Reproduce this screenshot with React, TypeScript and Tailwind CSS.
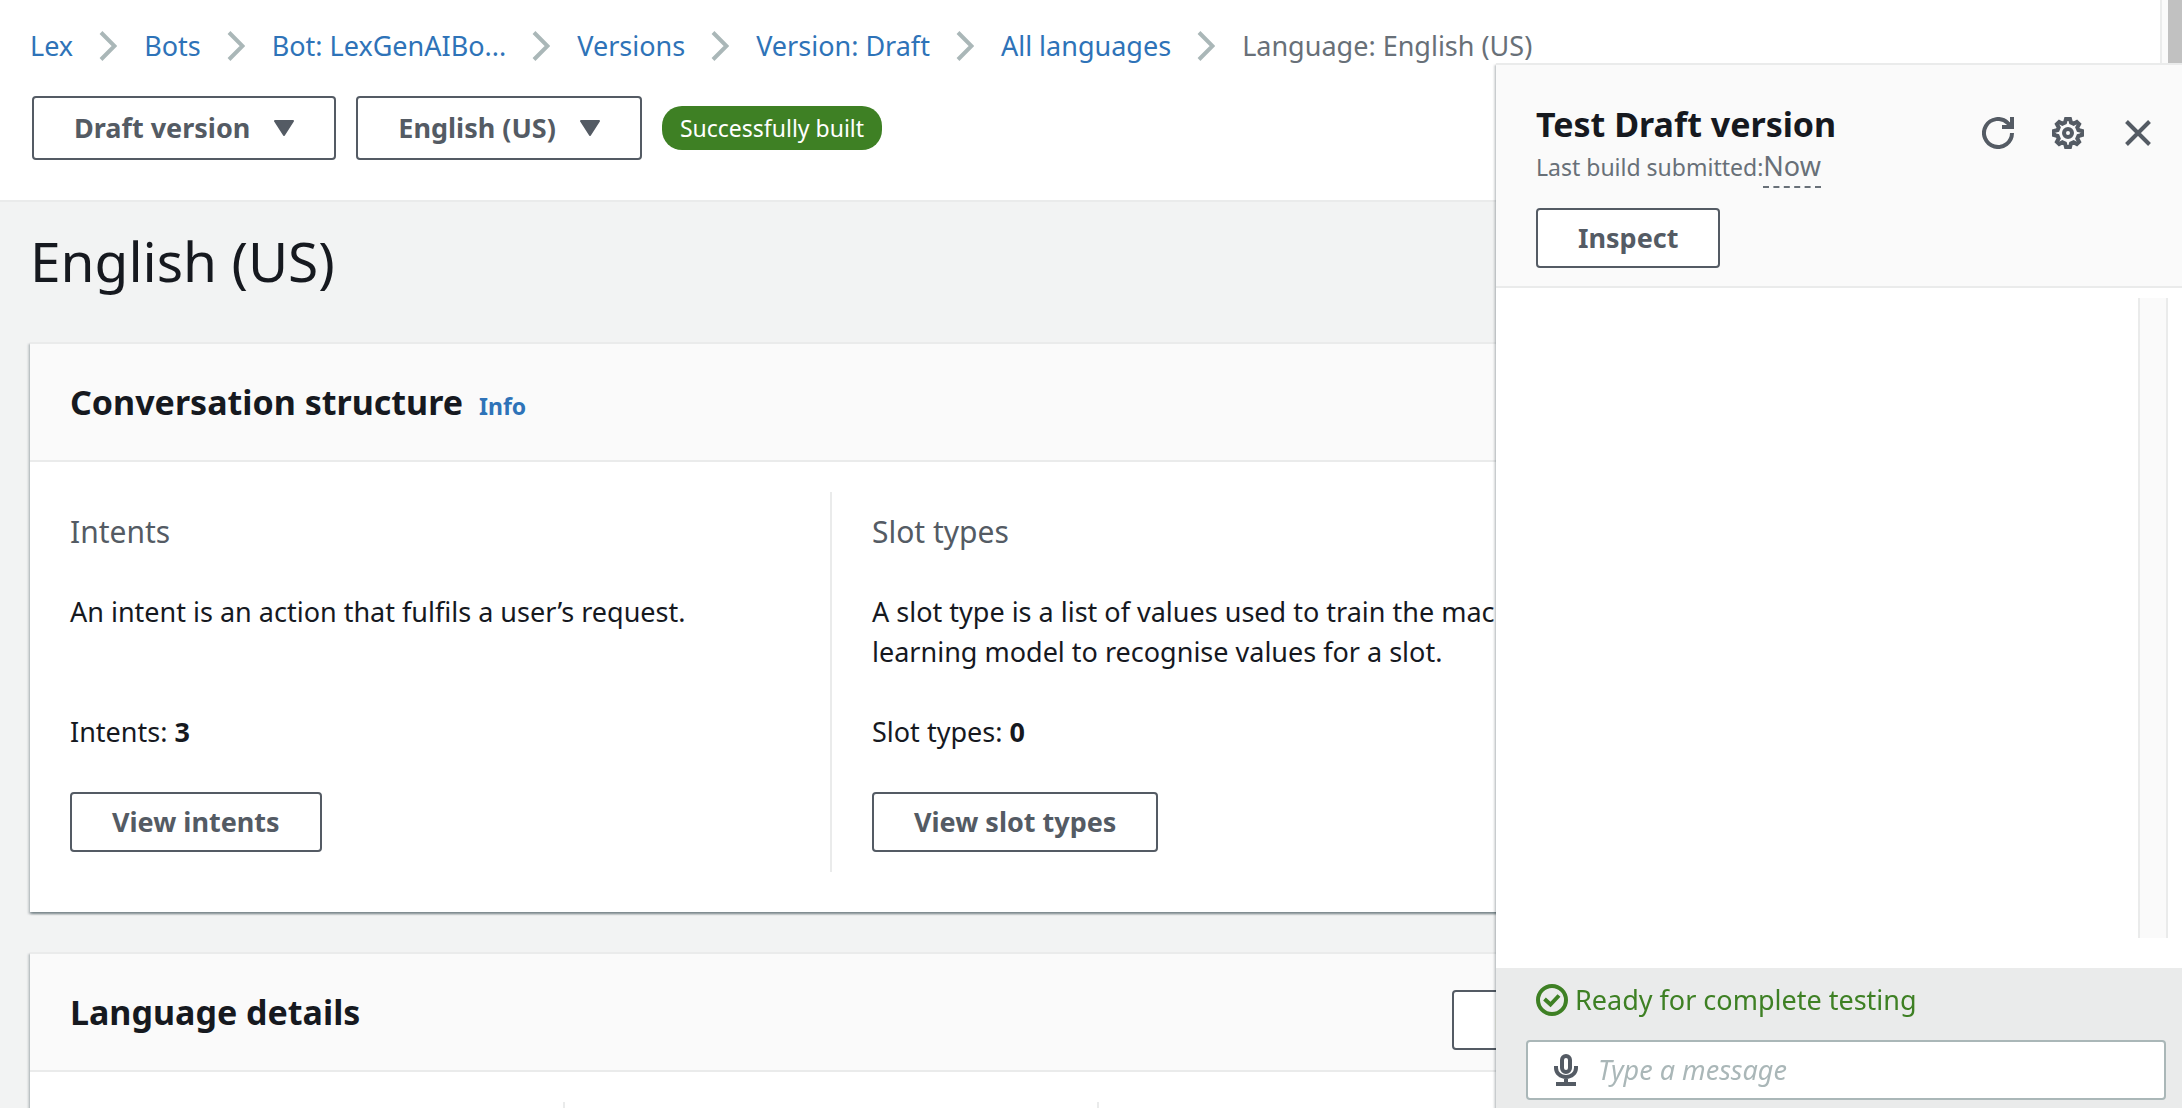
import type { ReactNode } from "react";

const crumbs = ["Lex", "Bots", "Bot: LexGenAIBo...", "Versions", "Version: Draft", "All languages"];

const raised =
  "shadow-[0_2px_2px_0_rgba(0,28,36,0.3),2px_2px_2px_0_rgba(0,28,36,0.15),-2px_2px_2px_0_rgba(0,28,36,0.15)]";

function Chevron() {
  return (
    <svg className="h-[30px] w-[18px] shrink-0" viewBox="0 0 18 30" fill="none" stroke="#aab7b8" strokeWidth="4" aria-hidden="true">
      <path d="M2 1.5 15.5 15 2 28.5" />
    </svg>
  );
}

function Caret() {
  return (
    <svg className="h-4 w-5" viewBox="0 0 20 16" fill="currentColor" stroke="currentColor" strokeWidth="2" strokeLinejoin="round" aria-hidden="true">
      <path d="M1 1h18L10 15z" />
    </svg>
  );
}

function RefreshIcon() {
  return (
    <svg className="size-8" viewBox="0 0 32 32" fill="none" stroke="currentColor" strokeWidth="4" aria-hidden="true">
      <path d="M30 16A14 14 0 1 1 25.9 6.1L29 9" />
      <path d="M30 0v10H20" />
    </svg>
  );
}

function GearIcon() {
  return (
    <svg className="size-8" viewBox="0 0 32 32" fill="none" stroke="currentColor" strokeWidth="4" aria-hidden="true">
      <path d="M14 2h4l1 3.6 2.6 1.1L24.8 4.9 27.1 7.2 25.3 10.4 26.4 13 30 14v4l-3.6 1-1.1 2.6 1.8 3.2-2.3 2.3-3.2-1.8L19 26.4 18 30h-4l-1-3.6-2.6-1.1-3.2 1.8-2.3-2.3 1.8-3.2L5.6 19 2 18v-4l3.6-1 1.1-2.6L4.9 7.2 7.2 4.9l3.2 1.8L13 5.6z" />
      <circle cx="16" cy="16" r="4" />
    </svg>
  );
}

function CloseIcon() {
  return (
    <svg className="size-8" viewBox="0 0 32 32" fill="none" stroke="currentColor" strokeWidth="4" aria-hidden="true">
      <path d="M4.5 4.5l23 23M27.5 4.5l-23 23" />
    </svg>
  );
}

function CheckIcon() {
  return (
    <svg className="size-8" viewBox="0 0 32 32" fill="none" stroke="currentColor" strokeWidth="4" aria-hidden="true">
      <circle cx="16" cy="16" r="14" />
      <path d="M8.5 15l6 5.5L23 11.5" />
    </svg>
  );
}

function MicIcon() {
  return (
    <svg className="h-8 w-6" viewBox="0 0 24 32" fill="none" stroke="currentColor" strokeWidth="4" aria-hidden="true">
      <rect x="8" y="2" width="8" height="16" rx="4" />
      <path d="M2 12v2a10 9 0 0 0 20 0v-2M12 23v7M2 30h20" />
    </svg>
  );
}

function Button({ children, tall = false }: { children: ReactNode; tall?: boolean }) {
  return (
    <button
      type="button"
      className={`flex items-center gap-6 rounded-sm border-2 border-[#545b64] bg-white px-10 text-[27px] leading-10 font-bold whitespace-nowrap text-[#545b64] ${tall ? "py-[10px]" : "py-2"}`}
    >
      {children}
    </button>
  );
}

function CardHeader({ title, children }: { title: string; children?: ReactNode }) {
  return (
    <div className="flex items-baseline gap-4 border-y-2 border-[#eaebeb] bg-[#fafafa] px-10 py-9">
      <h2 className="text-[34px] leading-11 font-bold">{title}</h2>
      {children}
    </div>
  );
}

function Column({ title, text, label, count, action }: { title: string; text: string; label: string; count: number; action: string }) {
  return (
    <div className="flex flex-col items-start px-10 py-5">
      <h3 className="text-[30px] leading-10 text-[#545b64]">{title}</h3>
      <p className="mt-10 min-h-20">{text}</p>
      <p className="my-10">
        {label}: <b>{count}</b>
      </p>
      <Button>{action}</Button>
    </div>
  );
}

function TestPanel() {
  return (
    <aside className={`fixed top-[63px] right-0 bottom-0 flex w-[686px] flex-col bg-white ${raised}`}>
      <header className="flex items-start justify-between border-y-2 border-[#eaebeb] bg-[#fafafa] pt-[37px] pr-7 pb-[18px] pl-10">
        <div className="flex flex-col items-start">
          <h2 className="text-[34px] leading-11 font-bold">Test Draft version</h2>
          <p className="mb-5 flex items-baseline text-[#687078]">
            <span className="text-[23px] leading-8">Last build submitted:</span>
            <span className="border-b-2 border-dashed border-[#687078] leading-10">Now</span>
          </p>
          <Button>Inspect</Button>
        </div>
        <div className="mt-[15px] flex gap-[38px] text-[#545b64]">
          <button type="button" aria-label="Refresh"><RefreshIcon /></button>
          <button type="button" aria-label="Settings"><GearIcon /></button>
          <button type="button" aria-label="Close"><CloseIcon /></button>
        </div>
      </header>
      <div className="flex flex-1 justify-end pt-[10px] pr-[14px] pb-[30px]">
        <div className="w-[30px] border-x-2 border-[#eaebeb] bg-[#fafafa]" />
      </div>
      <footer className="bg-[#eaebeb] pt-3 pr-4 pb-2 pl-[30px]">
        <p className="flex items-center gap-[7px] pl-[10px] text-[#3e8024]">
          <CheckIcon />
          Ready for complete testing
        </p>
        <label className="mt-5 flex items-center gap-5 rounded-sm border-2 border-[#aab7b8] bg-white px-[26px] py-2 text-[#545b64]">
          <MicIcon />
          <input
            type="text"
            aria-label="Message"
            placeholder="Type a message"
            className="h-10 min-w-0 flex-1 bg-transparent text-[#16191f] outline-none placeholder:text-[#aab7b8] placeholder:italic"
          />
        </label>
      </footer>
    </aside>
  );
}

export default function App() {
  return (
    <div className="flex h-screen overflow-hidden bg-[#f2f3f3] font-['Noto_Sans',sans-serif] text-[27px] leading-10 text-[#16191f]">
      <div className="min-w-0 flex-1">
        <header className="border-b-2 border-[#eaebeb] bg-white pt-[26px] pb-10 pl-[30px]">
          <nav aria-label="Breadcrumb">
            <ol className="flex items-center gap-[27px] whitespace-nowrap">
              {crumbs.map((c) => (
                <li key={c} className="flex items-center gap-[26px]">
                  <a href="#" className="text-[#2e73b8]">{c}</a>
                  <Chevron />
                </li>
              ))}
              <li className="text-[#687078]">Language: English (US)</li>
            </ol>
          </nav>
          <div className="mt-[30px] flex items-center gap-5 pl-0.5">
            <Button tall>Draft version <Caret /></Button>
            <Button tall>English (US) <Caret /></Button>
            <span className="rounded-[20px] bg-[#3e8024] px-[18px] py-1.5 text-[23px] leading-8 text-white">Successfully built</span>
          </div>
        </header>

        <main className="pt-[26px] pr-[526px] pl-[30px]">
          <h1 className="mb-12 text-[55px] leading-[66px]">English (US)</h1>

          <section className={`bg-white ${raised}`}>
            <CardHeader title="Conversation structure">
              <a href="#" className="text-[23px] leading-8 font-bold text-[#2e73b8]">Info</a>
            </CardHeader>
            <div className="grid grid-cols-2 divide-x-2 divide-[#eaebeb] pt-[30px] pb-10">
              <Column title="Intents" text="An intent is an action that fulfils a user’s request." label="Intents" count={3} action="View intents" />
              <Column title="Slot types" text="A slot type is a list of values used to train the machine learning model to recognise values for a slot." label="Slot types" count={0} action="View slot types" />
            </div>
          </section>

          <section className={`mt-10 bg-white ${raised}`}>
            <div className="flex items-start justify-between border-y-2 border-[#eaebeb] bg-[#fafafa] px-10 pt-9 pb-5">
              <h2 className="text-[34px] leading-11 font-bold">Language details</h2>
              <div className="flex w-[142px] flex-col">
                <Button>Edit</Button>
              </div>
            </div>
            <div className="grid grid-cols-3 divide-x-2 divide-[#eaebeb] py-[30px]">
              <div className="h-40" />
              <div className="h-40" />
              <div className="h-40" />
            </div>
          </section>
        </main>
      </div>
      <div className="flex w-[22px] justify-end border-l-2 border-[#eaebeb] bg-[#fafafa]">
        <div className="h-1/2 w-[14px] bg-[#c1c1c1]" />
      </div>
      <TestPanel />
    </div>
  );
}
